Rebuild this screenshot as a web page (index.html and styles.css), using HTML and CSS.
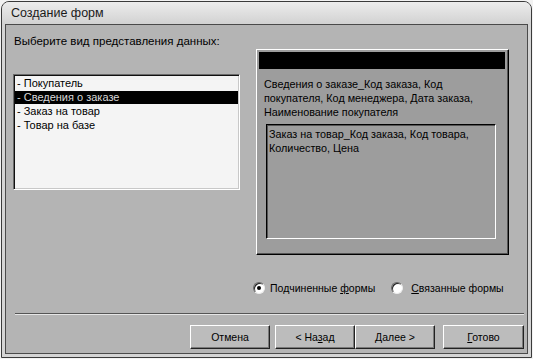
FILE: index.html
```html
<!DOCTYPE html>
<html lang="ru">
<head>
    <meta charset="UTF-8">
    <title>Создание форм</title>
    <link rel="stylesheet" href="styles.css">
</head>
<body>
    <div class="window">
        <div class="titlebar">Создание форм</div>

        <div class="client">
            <div class="content">
                <div class="left-col">
                    <div class="prompt">Выберите вид представления данных:</div>
                    <ul class="list">
                        <li>- Покупатель</li>
                        <li class="selected">- Сведения о заказе</li>
                        <li>- Заказ на товар</li>
                        <li>- Товар на базе</li>
                    </ul>
                </div>

                <div class="right-col">
                    <div class="preview">
                        <div class="preview-bar"></div>
                        <div class="preview-main">Сведения о заказе_Код заказа, Код<br>покупателя, Код менеджера, Дата заказа,<br>Наименование покупателя</div>
                        <div class="preview-sub">Заказ на товар_Код заказа, Код товара,<br>Количество, Цена</div>
                    </div>

                    <div class="options">
                        <label class="radio"><span class="radio-dot checked"></span><span>Подчиненные <u>ф</u>ормы</span></label>
                        <label class="radio radio-wide"><span class="radio-dot"></span><span><u>С</u>вязанные формы</span></label>
                    </div>
                </div>
            </div>

            <div class="separator"></div>

            <div class="buttons">
                <button class="btn">Отмена</button>
                <div class="btn-pair">
                    <button class="btn">&lt; На<u>з</u>ад</button>
                    <button class="btn"><u>Д</u>алее &gt;</button>
                </div>
                <button class="btn btn-last"><u>Г</u>отово</button>
            </div>
        </div>
    </div>
</body>
</html>
```

FILE: styles.css
```css
body {
    margin: 0;
    padding: 1px;
    background-color: #f2f2f2;
    font-family: "Liberation Sans", Arial, sans-serif;
    font-size: 11.5px;
    color: #000;
}

.window {
    box-sizing: border-box;
    width: 531px;
    height: 357px;
    display: flex;
    flex-direction: column;
    padding: 0 3px 3px 3px;
    border: 1px solid #3a3a3a;
    border-radius: 8px 8px 0 0;
    background-color: #d4d4d4;
}

.titlebar {
    height: 22px;
    line-height: 22px;
    margin: 0 -3px;
    padding-left: 9px;
    font-size: 12.5px;
    color: #1a1a1a;
    border-radius: 7px 7px 0 0;
    background: linear-gradient(#ececec, #d2d2d2);
}

.client {
    flex: 1;
    display: flex;
    flex-direction: column;
    padding: 9px 3px 0 7px;
    background-color: #b4b4b4;
    border: 1px solid #4a4a4a;
}


.content {
    display: flex;
    height: 279px;
}
.left-col {
    width: 227px;
}
.prompt {
    height: 14px;
    line-height: 14px;
    padding-left: 1px;
    white-space: nowrap;
}
.list {
    box-sizing: border-box;
    height: 116px;
    margin: 26px 0 0 0;
    padding: 2px 1px;
    list-style: none;
    font-size: 11px;
    background-color: #f4f4f4;
    border-top: 1px solid #6a6a6a;
    border-left: 1px solid #6a6a6a;
    border-right: 1px solid #fff;
    border-bottom: 1px solid #fff;
    box-shadow: inset 1px 1px 0 #111, inset -1px -1px 0 #c8c8c8;
}
.list li {
    height: 13px;
    line-height: 13px;
    margin-bottom: 1px;
    padding-left: 2px;
}
.list li.selected {
    background-color: #000;
    color: #d8d8d8;
}


.right-col {
    width: 253px;
    margin-left: 16px;
}
.preview {
    box-sizing: border-box;
    height: 206px;
    margin-top: 15px;
    padding: 2px 3px 0 2px;
    font-size: 10.8px;
    background-color: #9d9d9d;
    border-top: 1px solid #fff;
    border-left: 1px solid #fff;
    border-right: 1px solid #000;
    border-bottom: 1px solid #000;
    box-shadow: inset -1px -1px 0 #555;
}
.preview-bar {
    height: 17px;
    background-color: #000;
}
.preview-main {
    margin-top: 8px;
    padding-left: 5px;
    line-height: 14px;
    white-space: nowrap;
}
.preview-sub {
    box-sizing: border-box;
    height: 115px;
    margin: 5px 9px 0 7px;
    padding: 2px 2px;
    line-height: 14px;
    white-space: nowrap;
    border-top: 1px solid #000;
    border-left: 1px solid #000;
    border-right: 1px solid #fff;
    border-bottom: 1px solid #fff;
    box-shadow: inset 1px 1px 0 #555;
}

.options {
    display: flex;
    gap: 16px;
    height: 14px;
    margin: 26px 0 0 -3px;
    font-size: 10.5px;
}
.radio {
    display: flex;
    align-items: center;
    gap: 5px;
    line-height: 14px;
    white-space: nowrap;
}
.radio-wide {
    gap: 8px;
}
.radio-dot {
    position: relative;
    box-sizing: border-box;
    width: 12px;
    height: 12px;
    border-radius: 50%;
    background-color: #fff;
    border: 1px solid;
    border-color: #666 #eee #eee #666;
    box-shadow: inset 1px 1px 0 #222;
}
.radio-dot.checked::after {
    content: "";
    position: absolute;
    left: 3px;
    top: 3px;
    width: 4px;
    height: 4px;
    border-radius: 50%;
    background-color: #000;
}


.separator {
    height: 0;
    margin-left: 2px;
    border-top: 1px solid #555;
    border-bottom: 1px solid #e6e6e6;
}

.buttons {
    display: flex;
    justify-content: flex-end;
    margin-top: 10px;
}
.btn-pair {
    display: flex;
    margin: 0 8px 0 5px;
}
.btn {
    box-sizing: border-box;
    width: 80px;
    height: 24px;
    padding: 0;
    font-family: "Liberation Sans", Arial, sans-serif;
    font-size: 10.5px;
    color: #000;
    background-color: #bcbcbc;
    border-top: 1px solid #fff;
    border-left: 1px solid #fff;
    border-right: 1px solid #222;
    border-bottom: 1px solid #222;
    box-shadow: inset -1px -1px 0 #7a7a7a;
}
.btn-last {
    width: 81px;
}
```
